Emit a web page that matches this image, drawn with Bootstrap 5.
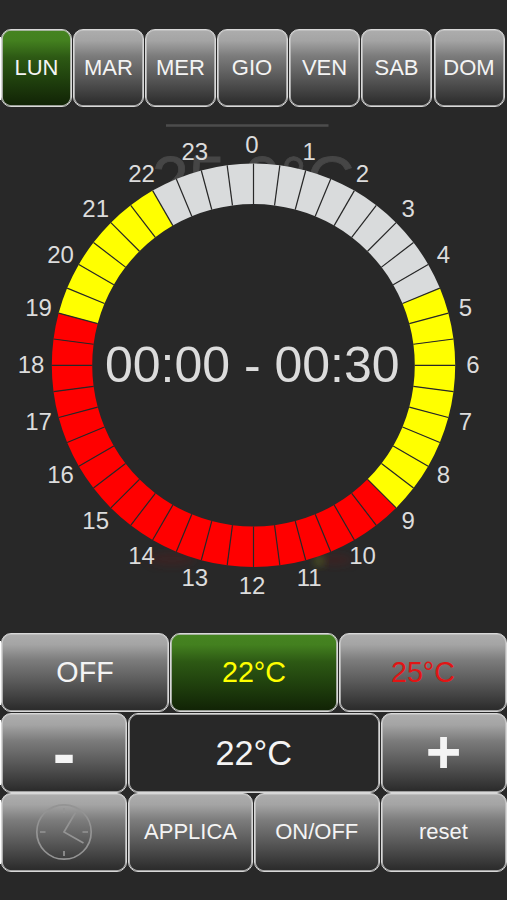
<!DOCTYPE html>
<html lang="it">
<head>
<meta charset="utf-8">
<meta name="viewport" content="width=device-width, initial-scale=1">
<title>Cronotermostato</title>
<link href="https://cdn.jsdelivr.net/npm/bootstrap@5.3.0/dist/css/bootstrap.min.css" rel="stylesheet">
<style>
body{background:#282828;font-family:"Liberation Sans",Arial,sans-serif;color:#fff}
.screen{width:507px;height:900px;padding-top:29px}
.key{--bs-btn-border-radius:10px;--bs-btn-color:#f4f4f4;--bs-btn-hover-color:#fff;--bs-btn-padding-x:0;--bs-btn-padding-y:0;
 border:1px solid #d8d8d8;box-shadow:inset 0 0 0 .8px #c4c4c4;height:100%;font-size:22px;line-height:1;
 background:linear-gradient(#adadad 0,#a4a4a4 14%,#7c7c7c 34%,#5c5c5c 60%,#2d2d2d 97%)}
.key-on{background:linear-gradient(#458420 0,#43801f 14%,#2d5914 36%,#21430e 62%,#122506 97%)}
.key-flat{background:#282828}
.edge{background:linear-gradient(#fff,#fff) 0 50%/1.2px calc(100% - 15px) no-repeat}
.days{display:grid;height:78px;padding-left:1px;grid-template-columns:72px 72px 71.5px 72.5px 72px 72.5px 73px}
.days .key{width:71px}
.dial{height:526px;overflow:visible}
.pads{display:grid;padding-left:1px;column-gap:1px}
.modes{grid-template-columns:repeat(3,168px);height:79px;margin-bottom:1px}
.modes .key{font-size:28.7px}
.adjust{grid-template-columns:126px 251.5px 126px;height:79.5px}
.adjust .key{font-size:34.3px}
.adjust .sign{font-size:61px;font-weight:700}
.adjust .minus{font-size:68px}
.actions{grid-template-columns:126px 125px 125.5px 126px;height:79px}
.c-low{color:#ff0}.c-high{color:#e11515}
</style>
</head>
<body>
<main class="screen d-flex flex-column overflow-hidden">
 <div class="days edge">
  <button class="btn key key-on">LUN</button><button class="btn key">MAR</button><button class="btn key">MER</button><button class="btn key">GIO</button><button class="btn key">VEN</button><button class="btn key">SAB</button><button class="btn key">DOM</button>
 </div>
 <svg class="dial d-block" width="507" height="526" viewBox="0 107 507 526" font-family="Liberation Sans, Arial, sans-serif">
  <defs><filter id="soft" x="-50%" y="-50%" width="200%" height="200%"><feGaussianBlur stdDeviation="4"/></filter></defs>
  <path d="M166 125.5H328.5" stroke="#4c4c4c" stroke-width="2.4"/>
  <text x="152" y="203" font-size="66" fill="#464646" stroke="#464646" stroke-width=".8">25.0°C</text>
  <ellipse cx="172" cy="559" rx="24" ry="7" fill="#5a1c1c" opacity=".35" filter="url(#soft)"/>
  <ellipse cx="335" cy="560" rx="18" ry="6" fill="#5a1c1c" opacity=".35" filter="url(#soft)"/>
  <circle cx="319" cy="561" r="5" fill="#5a6a20" opacity=".8" filter="url(#soft)"/>
  <circle cx="253.5" cy="365.3" r="190" fill="#282828"/>
  <g id="ring"></g>
  <g id="hours" font-size="24" fill="#dcdcdc" text-anchor="middle"></g>
  <text x="252.3" y="382.3" font-size="50" fill="#dcdcdc" text-anchor="middle">00:00 - 00:30</text>
 </svg>
 <div class="pads modes edge">
  <button class="btn key">OFF</button><button class="btn key key-on c-low">22°C</button><button class="btn key c-high">25°C</button>
 </div>
 <div class="pads adjust edge">
  <button class="btn key sign minus">-</button><button class="btn key key-flat">22°C</button><button class="btn key sign">+</button>
 </div>
 <div class="pads actions edge">
  <button class="btn key" aria-label="Orologio"><svg class="d-block mx-auto" width="58" height="58" viewBox="0 0 58 58" fill="none" stroke="#949494" stroke-width="1.7"><circle cx="29" cy="29" r="27.2"/><path d="M29 5v5M29 48v5M5 29h5.500M47.500 29h5.500M40.500 9.500L29 29L48.500 40"/></svg></button>
  <button class="btn key">APPLICA</button><button class="btn key">ON/OFF</button><button class="btn key">reset</button>
 </div>
</main>
<script>
// 48 half-hour slots, clockwise from midnight
const NS='http://www.w3.org/2000/svg',CX=253.5,CY=365.3,R=201.7,r=161.3;
const pt=(q,a)=>(CX+q*Math.sin(a)).toFixed(2)+' '+(CY-q*Math.cos(a)).toFixed(2);
const ring=document.getElementById('ring'),hours=document.getElementById('hours');
for(let i=0;i<48;i++){
 const a=i*Math.PI/24,b=(i+1)*Math.PI/24,p=document.createElementNS(NS,'path');
 p.setAttribute('d',`M${pt(r,a)}L${pt(R,a)}A${R} ${R} 0 0 1 ${pt(R,b)}L${pt(r,b)}A${r} ${r} 0 0 0 ${pt(r,a)}Z`);
 p.setAttribute('fill',i<9||i>=44?'#d9dbdc':i<18||i>=38?'#ff0':'#f00');
 ring.appendChild(p);
}
for(let i=0;i<48;i++){
 const a=i*Math.PI/24,p=document.createElementNS(NS,'path');
 p.setAttribute('d',`M${pt(r,a)}L${pt(R,a)}`);
 p.setAttribute('stroke','#282828');p.setAttribute('stroke-width','1.2');
 ring.appendChild(p);
}
for(let h=0;h<24;h++){
 const a=h*Math.PI/12,t=document.createElementNS(NS,'text');
 t.setAttribute('x',(252+221*Math.sin(a)).toFixed(1));
 t.setAttribute('y',(373-220.500*Math.cos(a)).toFixed(1));
 t.textContent=h;hours.appendChild(t);
}
</script>
<script src="https://cdn.jsdelivr.net/npm/bootstrap@5.3.0/dist/js/bootstrap.bundle.min.js"></script>
</body>
</html>
